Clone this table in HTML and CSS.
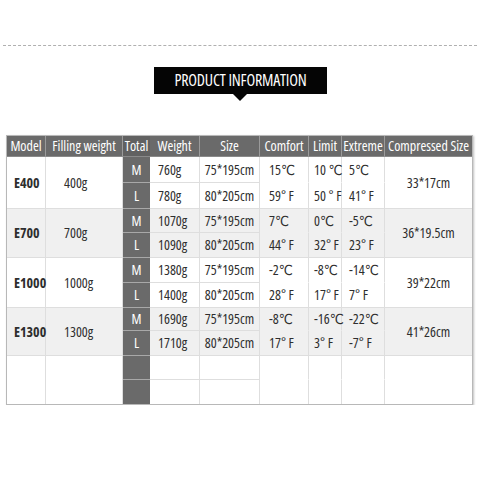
FILE: index.html
```html
<!DOCTYPE html>
<html>
<head>
<meta charset="utf-8">
<link rel="stylesheet" href="styles.css">
</head>
<body>
<div class="rule"></div>
<div class="banner-wrap">
  <div class="banner">PRODUCT INFORMATION</div>
</div>
<table class="spec">
  <colgroup>
    <col class="c-model"><col class="c-fill"><col class="c-ml"><col class="c-wt"><col class="c-sz"><col class="c-cf"><col class="c-lm"><col class="c-ex"><col class="c-cs">
  </colgroup>
  <thead>
    <tr>
      <th>Model</th><th>Filling weight</th><th class="th-total">Total</th><th class="th-weight">Weight</th><th>Size</th><th>Comfort</th><th>Limit</th><th>Extreme</th><th class="last">Compressed Size</th>
    </tr>
  </thead>
  <tbody>
    <tr class="g-white h25">
      <td rowspan="2" class="model">E400</td><td rowspan="2" class="fill">400g</td>
      <td class="ml">M</td><td class="wt">760g</td><td class="sz">75*195cm</td>
      <td class="cf top">15℃</td><td class="lm top">10 ℃</td><td class="ex top">5℃</td>
      <td rowspan="2" class="cs last">33*17cm</td>
    </tr>
    <tr class="g-white h25">
      <td class="ml">L</td><td class="wt">780g</td><td class="sz">80*205cm</td>
      <td class="cf">59° F</td><td class="lm">50 ° F</td><td class="ex">41° F</td>
    </tr>
    <tr class="g-grey h23">
      <td rowspan="2" class="model">E700</td><td rowspan="2" class="fill">700g</td>
      <td class="ml">M</td><td class="wt">1070g</td><td class="sz">75*195cm</td>
      <td class="cf top">7℃</td><td class="lm top">0℃</td><td class="ex top">-5℃</td>
      <td rowspan="2" class="cs last">36*19.5cm</td>
    </tr>
    <tr class="g-grey h24">
      <td class="ml">L</td><td class="wt">1090g</td><td class="sz">80*205cm</td>
      <td class="cf">44° F</td><td class="lm">32° F</td><td class="ex">23° F</td>
    </tr>
    <tr class="g-white h24">
      <td rowspan="2" class="model">E1000</td><td rowspan="2" class="fill">1000g</td>
      <td class="ml">M</td><td class="wt">1380g</td><td class="sz">75*195cm</td>
      <td class="cf top">-2℃</td><td class="lm top">-8℃</td><td class="ex top">-14℃</td>
      <td rowspan="2" class="cs last">39*22cm</td>
    </tr>
    <tr class="g-white h24">
      <td class="ml">L</td><td class="wt">1400g</td><td class="sz">80*205cm</td>
      <td class="cf">28° F</td><td class="lm">17° F</td><td class="ex">7° F</td>
    </tr>
    <tr class="g-grey h22">
      <td rowspan="2" class="model">E1300</td><td rowspan="2" class="fill">1300g</td>
      <td class="ml">M</td><td class="wt">1690g</td><td class="sz">75*195cm</td>
      <td class="cf top">-8℃</td><td class="lm top">-16℃</td><td class="ex top">-22℃</td>
      <td rowspan="2" class="cs last">41*26cm</td>
    </tr>
    <tr class="g-grey h24">
      <td class="ml">L</td><td class="wt">1710g</td><td class="sz">80*205cm</td>
      <td class="cf">17° F</td><td class="lm">3° F</td><td class="ex">-7° F</td>
    </tr>
    <tr class="g-white h23">
      <td rowspan="2" class="model end"></td><td rowspan="2" class="fill end"></td>
      <td class="ml"></td><td class="wt"></td><td class="sz"></td>
      <td class="cf top"></td><td class="lm top"></td><td class="ex top"></td>
      <td rowspan="2" class="cs last end"></td>
    </tr>
    <tr class="g-white h24">
      <td class="ml end"></td><td class="wt end"></td><td class="sz end"></td>
      <td class="cf end"></td><td class="lm end"></td><td class="ex end"></td>
    </tr>
  </tbody>
</table>
</body>
</html>
```

FILE: styles.css
```css
html, body {
  margin: 0;
  padding: 0;
  background: #ffffff;
}
body {
  width: 480px;
  font-family: "Open Sans", "DejaVu Sans Condensed", sans-serif;
  font-stretch: 75%;
  color: #2e2e2e;
}
.rule {
  margin: 45px 3px 0 3px;
  border-top: 1px dashed #b0b0b0;
}
.banner-wrap {
  display: flex;
  justify-content: center;
  margin-top: 21px;
}
.banner {
  position: relative;
  width: 173px;
  height: 27px;
  background: #050505;
  color: #ffffff;
  font-size: 16px;
  letter-spacing: -0.2px;
  line-height: 27px;
  text-align: center;
  white-space: nowrap;
  margin-left: 1px;
}
.banner::after {
  content: "";
  position: absolute;
  left: 79px;
  top: 27px;
  border-left: 7px solid transparent;
  border-right: 7px solid transparent;
  border-top: 7px solid #050505;
}
.spec {
  margin: 41px 0 0 6px;
  width: 465px;
  table-layout: fixed;
  border-collapse: separate;
  border-spacing: 0;
  border: 1px solid #b8b8b8;
  box-shadow: 1px 1px 2px rgba(0,0,0,0.25);
  font-size: 14px;
}
.c-model { width: 39px; }
.c-fill { width: 77px; }
.c-ml { width: 27px; }
.c-wt { width: 50px; }
.c-sz { width: 60px; }
.c-cf { width: 49px; }
.c-lm { width: 33px; }
.c-ex { width: 43px; }
.c-cs { width: 87px; }
.spec th {
  height: 20px;
  padding: 0;
  background: #6a6a6a;
  color: #ffffff;
  font-weight: normal;
  text-align: center;
  white-space: nowrap;
  line-height: 20px;
  border-right: 1px solid #9a9a9a;
  border-bottom: 1px solid #8a8a8a;
}
.spec th.th-total {
  background: #616161;
  border-right: none;
}
.spec th.last { border-right: none; }
.spec td {
  height: 24px;
  padding: 0;
  line-height: 20px;
  white-space: nowrap;
  border-right: 1px solid #dedede;
  border-bottom: 1px solid #dedede;
  vertical-align: middle;
}
.spec .h25 > td { height: 25px; }
.spec .h24 > td { height: 24px; }
.spec .h23 > td { height: 23px; }
.spec .h22 > td { height: 22px; }
.g-grey td { background: #f0f0f0; }
.g-white td { background: #ffffff; }
.spec td.last { border-right: none; }
.spec td.end { border-bottom: none; }
.spec .g-grey td.top { border-bottom-color: #f0f0f0; }
.spec .g-white td.top { border-bottom-color: #ffffff; }
.spec td.model {
  padding-left: 7px;
  font-weight: bold;
}
.spec td.fill { padding-left: 18px; }
.spec tr td.ml {
  background: #6a6a6a;
  color: #ffffff;
  text-align: center;
  border-right: none;
  border-bottom: 1px solid #a8a8a8;
}
.spec tr td.ml.end { border-bottom: none; }
.spec td.wt { padding-left: 8px; }
.spec td.sz { text-align: center; }
.spec td.cf { padding-left: 9px; }
.spec td.lm { padding-left: 5px; }
.spec td.ex { padding-left: 7px; }
.spec td.cs { text-align: center; }
```
